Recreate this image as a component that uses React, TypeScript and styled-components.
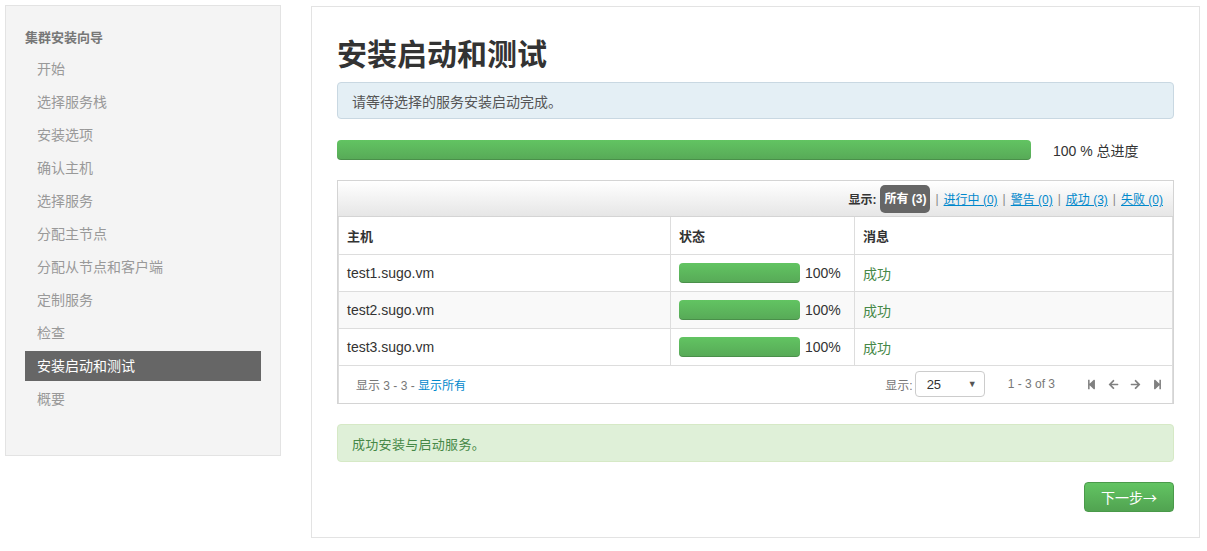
import React from "react";
import styled, { createGlobalStyle } from "styled-components";
import { FaStepBackward, FaStepForward, FaArrowLeft, FaArrowRight } from "react-icons/fa";

const Global = createGlobalStyle`
  html, body { margin: 0; padding: 0; background: #fff; }
  body {
    font-family: "Liberation Sans", Arial, "Noto Sans CJK SC", sans-serif;
    font-size: 14px;
    color: #333;
  }
  * { box-sizing: border-box; }
`;

const Page = styled.div`
  display: flex;
  align-items: flex-start;
  gap: 30px;
  padding: 5px 7px 0 5px;
`;

const Sidebar = styled.nav`
  width: 276px;
  flex: none;
  background: #f4f4f4;
  border: 1px solid #e3e3e3;
  padding: 22px 19px 38px 19px;
`;

const SideHeader = styled.div`
  font-size: 13px;
  font-weight: bold;
  color: #777;
  line-height: 20px;
  height: 20px;
  margin-bottom: 6px;
`;

const SideItem = styled.div<{ $active?: boolean }>`
  height: 30px;
  line-height: 30px;
  margin-bottom: 3px;
  padding-left: 12px;
  font-size: 14px;
  color: ${(p) => (p.$active ? "#fff" : "#999")};
  background: ${(p) => (p.$active ? "#666" : "transparent")};
`;

const Main = styled.main`
  flex: 1;
  margin-top: 1px;
  border: 1px solid #e3e3e3;
  padding: 25px 25px 25px 25px;
  width: 889px;
`;

const Title = styled.h2`
  margin: 0 0 10px 0;
  font-size: 30px;
  line-height: 40px;
  font-weight: bold;
  color: #333;
  font-family: "Noto Sans CJK SC", sans-serif;
`;

const Alert = styled.div<{ $kind: "info" | "success" }>`
  height: ${(p) => (p.$kind === "info" ? "37px" : "38px")};
  display: flex;
  align-items: center;
  padding: 0 14px;
  border-radius: 4px;
  font-size: ${(p) => (p.$kind === "info" ? "14px" : "13px")};
  letter-spacing: ${(p) => (p.$kind === "info" ? "0" : "0.3px")};
  background: ${(p) => (p.$kind === "info" ? "#e4eff5" : "#dff0d8")};
  border: 1px solid ${(p) => (p.$kind === "info" ? "#c9d8e2" : "#d6e9c6")};
  color: ${(p) => (p.$kind === "info" ? "#555" : "#468847")};
`;

const ProgressRow = styled.div`
  display: flex;
  align-items: center;
  margin-top: 21px;
  gap: 22px;
`;

const Bar = styled.div<{ $w: number }>`
  width: ${(p) => p.$w}px;
  height: 20px;
  border-radius: 4px;
  background: linear-gradient(to bottom, #62c462, #57a957);
  box-shadow: inset 0 -1px 0 rgba(0, 0, 0, 0.15);
  flex: none;
`;

const ProgressText = styled.span`
  font-size: 14px;
  color: #333;
`;

const TableBox = styled.div`
  margin-top: 20px;
  border: 1px solid #d4d4d4;
`;

const Toolbar = styled.div`
  height: 36px;
  display: flex;
  align-items: center;
  justify-content: flex-end;
  padding-right: 10px;
  background: linear-gradient(to bottom, #ffffff, #e6e6e6);
  border-bottom: 1px solid #d4d4d4;
  font-size: 12px;
`;

const FilterLabel = styled.span`
  font-weight: bold;
  color: #333;
  margin-right: 4px;
`;

const Pill = styled.span`
  background: #666;
  color: #fff;
  font-weight: bold;
  border-radius: 5px;
  padding: 0 4px;
  height: 28px;
  line-height: 28px;
`;

const Sep = styled.span`
  color: #888;
  margin: 0 5px;
`;

const FilterLink = styled.a`
  color: #0088cc;
  text-decoration: underline;
  cursor: pointer;
`;

const Table = styled.table`
  width: 100%;
  border-collapse: collapse;
  border-left: 1px solid #ddd;
  border-right: 1px solid #ddd;
  table-layout: fixed;
`;

const Th = styled.th<{ $w?: number }>`
  text-align: left;
  font-size: 13px;
  font-weight: bold;
  color: #333;
  height: 37px;
  padding: 0 8px;
  border: 1px solid #ddd;
  border-top: none;
  ${(p) => (p.$w ? `width: ${p.$w}px;` : "")}
`;

const Tr = styled.tr<{ $odd?: boolean }>`
  background: ${(p) => (p.$odd ? "#f9f9f9" : "#fff")};
`;

const Td = styled.td<{ $ok?: boolean }>`
  height: 37px;
  padding: 0 8px;
  border: 1px solid #ddd;
  font-size: 14px;
  color: ${(p) => (p.$ok ? "#468847" : "#333")};
`;

const StatusCell = styled.div`
  display: flex;
  align-items: center;
  gap: 5px;
`;

const FooterTd = styled.td`
  height: 38px;
  padding: 0 9px 0 17px;
  font-size: 12px;
  color: #777;
  border-top: 1px solid #ddd;
`;

const FooterInner = styled.div`
  display: flex;
  align-items: center;
`;

const FooterLink = styled.a`
  color: #0088cc;
  text-decoration: none;
`;

const Spacer = styled.div`
  flex: 1;
`;

const Select = styled.div`
  width: 70px;
  height: 26px;
  margin-left: 2px;
  border: 1px solid #ccc;
  border-radius: 4px;
  display: flex;
  align-items: center;
  justify-content: space-between;
  padding: 0 7px 0 11px;
  color: #333;
  font-size: 13px;
  background: #fff;
`;

const Caret = styled.span`
  font-size: 9px;
  color: #555;
`;

const Count = styled.span`
  margin-left: 23px;
  margin-right: 31px;
`;

const Pager = styled.div`
  display: flex;
  align-items: center;
  gap: 11px;
  color: #808080;
  font-size: 11px;
  & svg { display: block; }
`;

const ButtonRow = styled.div`
  display: flex;
  justify-content: flex-end;
  margin-top: 20px;
`;

const NextButton = styled.button`
  width: 90px;
  height: 30px;
  border: 1px solid #4a9a4a;
  border-radius: 4px;
  background: linear-gradient(to bottom, #62c462, #51a351);
  color: #fff;
  font-size: 14px;
  font-family: "Noto Sans CJK SC", sans-serif;
  cursor: pointer;
`;

const SuccessWrap = styled.div`
  margin-top: 20px;
`;

const steps = [
  "开始",
  "选择服务栈",
  "安装选项",
  "确认主机",
  "选择服务",
  "分配主节点",
  "分配从节点和客户端",
  "定制服务",
  "检查",
  "安装启动和测试",
  "概要",
];

const hosts = ["test1.sugo.vm", "test2.sugo.vm", "test3.sugo.vm"];

export default function App() {
  return (
    <>
      <Global />
      <Page>
        <Sidebar>
          <SideHeader>集群安装向导</SideHeader>
          {steps.map((s) => (
            <SideItem key={s} $active={s === "安装启动和测试"}>
              {s}
            </SideItem>
          ))}
        </Sidebar>
        <Main>
          <Title>安装启动和测试</Title>
          <Alert $kind="info">请等待选择的服务安装启动完成。</Alert>
          <ProgressRow>
            <Bar $w={694} />
            <ProgressText>100 % 总进度</ProgressText>
          </ProgressRow>
          <TableBox>
            <Toolbar>
              <FilterLabel>显示:</FilterLabel>
              <Pill>所有 (3)</Pill>
              <Sep>|</Sep>
              <FilterLink>进行中 (0)</FilterLink>
              <Sep>|</Sep>
              <FilterLink>警告 (0)</FilterLink>
              <Sep>|</Sep>
              <FilterLink>成功 (3)</FilterLink>
              <Sep>|</Sep>
              <FilterLink>失败 (0)</FilterLink>
            </Toolbar>
            <Table>
              <thead>
                <tr>
                  <Th $w={332}>主机</Th>
                  <Th $w={184}>状态</Th>
                  <Th>消息</Th>
                </tr>
              </thead>
              <tbody>
                {hosts.map((h, i) => (
                  <Tr key={h} $odd={i === 1}>
                    <Td>{h}</Td>
                    <Td>
                      <StatusCell>
                        <Bar $w={121} />
                        <span>100%</span>
                      </StatusCell>
                    </Td>
                    <Td $ok>成功</Td>
                  </Tr>
                ))}
                <tr>
                  <FooterTd colSpan={3}>
                    <FooterInner>
                      <span>
                        显示 3 - 3 - <FooterLink>显示所有</FooterLink>
                      </span>
                      <Spacer />
                      <span>显示:</span>
                      <Select>
                        <span>25</span>
                        <Caret>▼</Caret>
                      </Select>
                      <Count>1 - 3 of 3</Count>
                      <Pager>
                        <FaStepBackward />
                        <FaArrowLeft />
                        <FaArrowRight />
                        <FaStepForward />
                      </Pager>
                    </FooterInner>
                  </FooterTd>
                </tr>
              </tbody>
            </Table>
          </TableBox>
          <SuccessWrap>
            <Alert $kind="success">成功安装与启动服务。</Alert>
          </SuccessWrap>
          <ButtonRow>
            <NextButton>下一步→</NextButton>
          </ButtonRow>
        </Main>
      </Page>
    </>
  );
}
